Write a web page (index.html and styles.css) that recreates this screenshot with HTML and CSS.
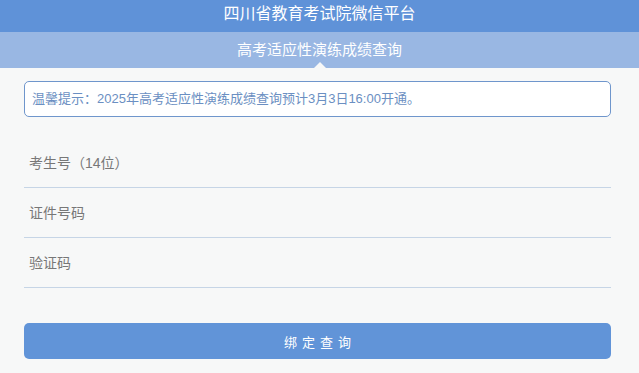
FILE: index.html
```html
<!DOCTYPE html>
<html lang="zh-CN">

<head>
    <meta charset="UTF-8">
    <title>四川省教育考试院微信平台</title>
    <link rel="stylesheet" href="styles.css">
</head>

<body>
    <div class="header">四川省教育考试院微信平台</div>
    <div class="subbar">
        <span>高考适应性演练成绩查询</span>
        <i class="arrow"></i>
    </div>
    <div class="main">
        <div class="notice">温馨提示：2025年高考适应性演练成绩查询预计3月3日16:00开通。</div>
        <form class="form">
            <div class="field"><input type="text" placeholder="考生号（14位）"></div>
            <div class="field"><input type="text" placeholder="证件号码"></div>
            <div class="field"><input type="text" placeholder="验证码"></div>
            <button type="button" class="btn">绑定查询</button>
        </form>
    </div>
</body>

</html>
```

FILE: styles.css
```css
html,
body {
    margin: 0;
    padding: 0;
}

body {
    background-color: #f7f8f8;
    font-family: "Liberation Sans", "Noto Sans CJK SC", sans-serif;
}

.header {
    height: 32px;
    line-height: 28px;
    background-color: #5f92d8;
    color: #fff;
    font-size: 16px;
    text-align: center;
}

.subbar {
    height: 36px;
    line-height: 36px;
    background-color: #99b7e3;
    color: #fff;
    font-size: 15px;
    text-align: center;
    position: relative;
}

.arrow {
    position: absolute;
    left: 314px;
    bottom: 0;
    width: 0;
    height: 0;
    border-left: 6px solid transparent;
    border-right: 6px solid transparent;
    border-bottom: 6px solid #f7f8f8;
}

.main {
    padding: 13px 28px 0 24px;
}

.notice {
    height: 34px;
    line-height: 34px;
    border: 1px solid #6f96cc;
    border-radius: 5px;
    background-color: #fff;
    color: #6b8fc2;
    font-size: 13px;
    padding: 0 7px;
}

.form {
    margin-top: 21px;
}

.field {
    height: 49px;
    border-bottom: 1px solid #c6d5e6;
    display: flex;
    align-items: center;
}

.field input {
    flex: 1;
    border: 0;
    outline: none;
    background: transparent;
    padding: 0 5px;
    font-family: inherit;
    font-size: 14px;
    color: #555;
}

.field input::placeholder {
    color: #777;
}

.btn {
    display: block;
    width: 100%;
    height: 36px;
    margin-top: 35px;
    border: 0;
    border-radius: 5px;
    background-color: #6194d8;
    color: #fff;
    font-family: inherit;
    font-size: 13px;
    letter-spacing: 5px;
    text-indent: 5px;
}
```
